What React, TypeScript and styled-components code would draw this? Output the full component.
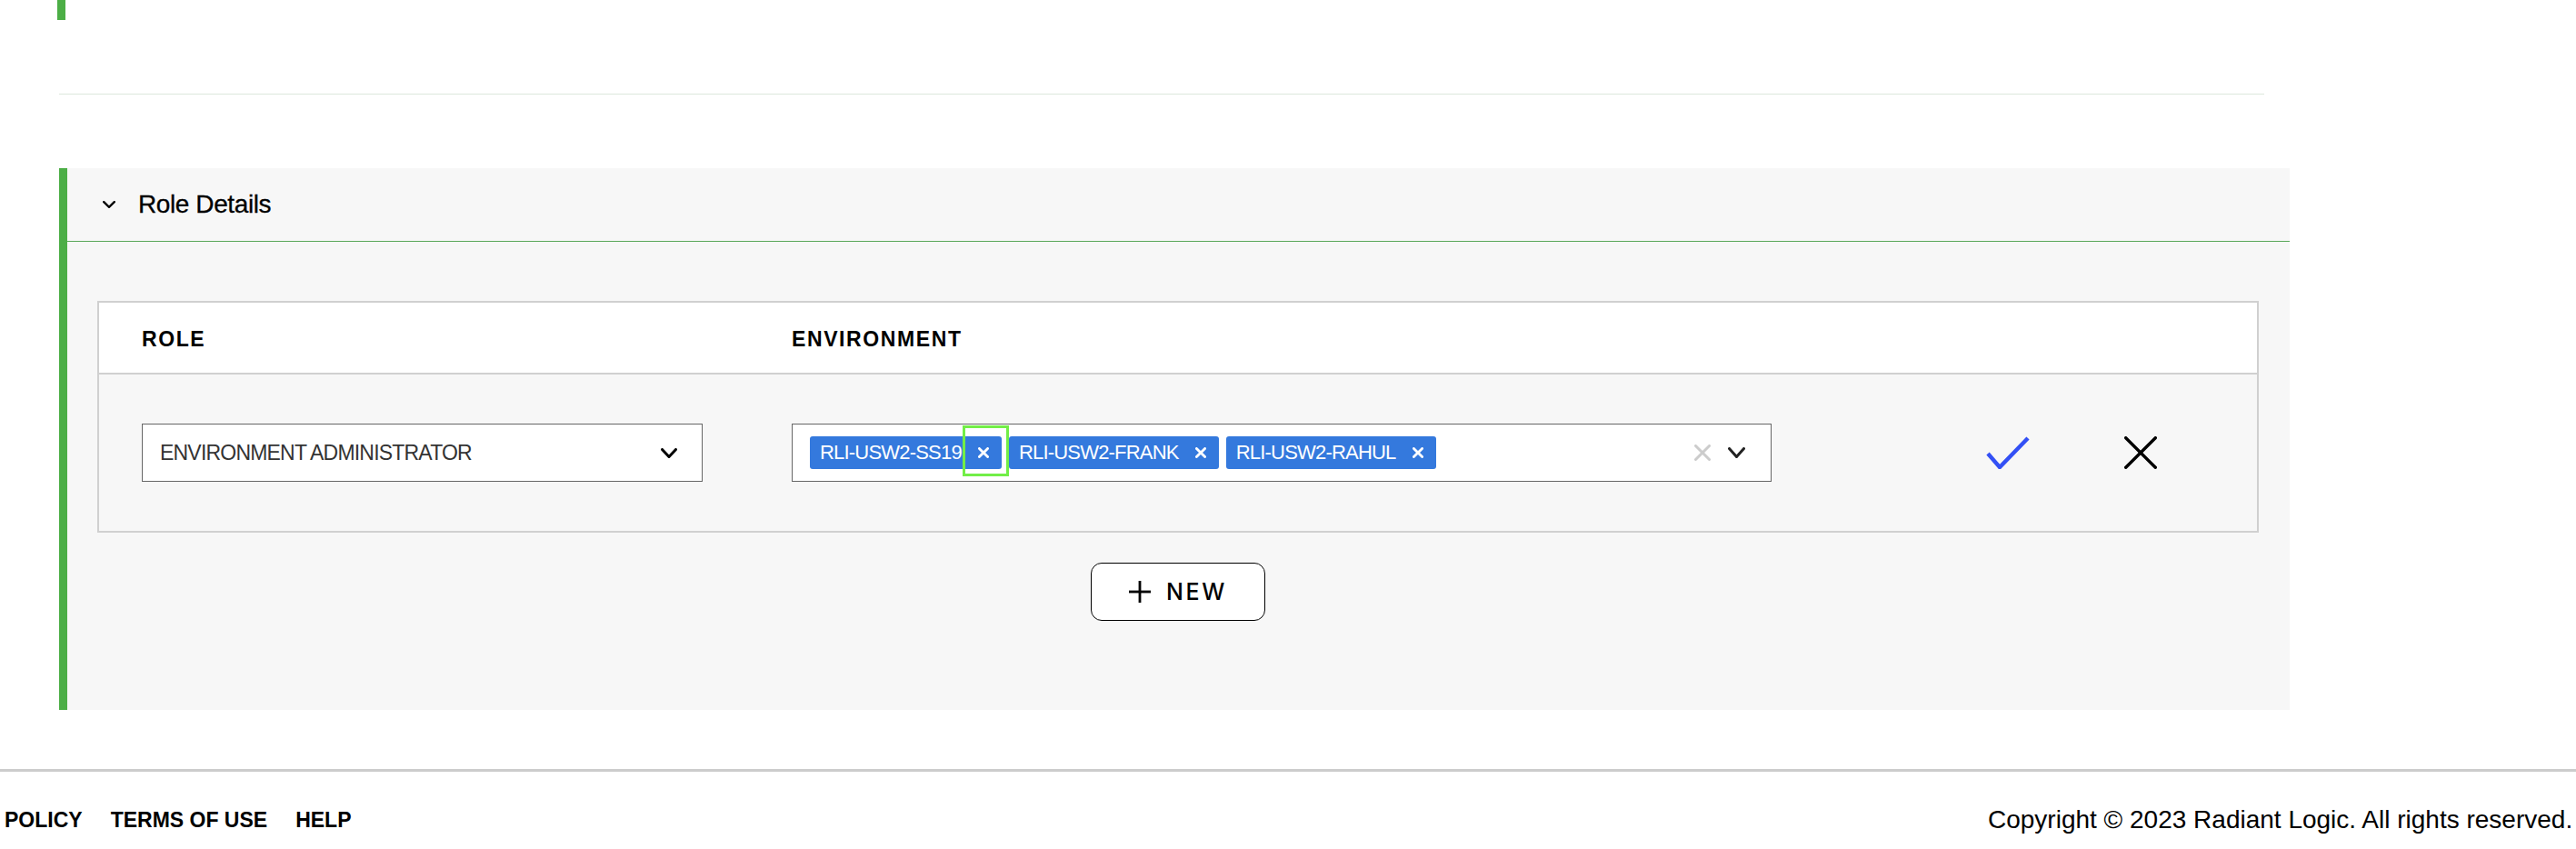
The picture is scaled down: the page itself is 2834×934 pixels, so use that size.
import React from "react";
import styled, { createGlobalStyle } from "styled-components";

const GlobalStyle = createGlobalStyle`
  html, body {
    margin: 0;
    padding: 0;
    background: #ffffff;
    overflow: hidden;
  }
  body {
    font-family: "Liberation Sans", Arial, sans-serif;
    color: #000;
  }
`;

const Page = styled.div`
  width: 2834px;
  height: 934px;
  display: flex;
  flex-direction: column;
`;

const Main = styled.main`
  width: 2456px;
  margin-left: 63px;
  display: flex;
  flex-direction: column;
  flex-shrink: 0;
`;

const PrevSection = styled.div`
  height: 22px;
  border-left: 9px solid #4cae46;
`;

const Divider = styled.hr`
  margin: 81px 28px 0 2px;
  border: none;
  height: 1px;
  background: #dde8dd;
`;

const Panel = styled.section`
  margin: 81px 0 0 2px;
  background: #f7f7f7;
  border-left: 9px solid #4cae46;
`;

const PanelHeader = styled.div`
  height: 80px;
  border-bottom: 1px solid #5aa75a;
  display: flex;
  align-items: center;
  gap: 25px;
  padding-left: 39px;
`;

const Title = styled.h2`
  margin: 0;
  font-size: 28px;
  font-weight: 400;
  letter-spacing: -0.4px;
  color: #000;
  -webkit-text-stroke: 0.3px #000;
`;

const PanelBody = styled.div`
  padding: 65px 34px 98px 33px;
  display: flex;
  flex-direction: column;
  align-items: center;
`;

const Table = styled.div`
  width: 100%;
  box-sizing: border-box;
  border: 2px solid #d0d0d0;
`;

const Row = styled.div<{ head?: boolean }>`
  display: flex;
  align-items: center;
  box-sizing: border-box;
  padding: ${(p) => (p.head ? "4px 0 0 47px" : "0 0 0 47px")};
  height: ${(p) => (p.head ? "79px" : "172px")};
  background: ${(p) => (p.head ? "#ffffff" : "#f7f7f7")};
  border-bottom: ${(p) => (p.head ? "2px solid #d0d0d0" : "none")};
`;

const Cell = styled.div<{ w: number }>`
  flex: 0 0 ${(p) => p.w}px;
  display: flex;
  align-items: center;
`;

const HeadLabel = styled.span`
  font-size: 23px;
  font-weight: 700;
  letter-spacing: 1.6px;
  color: #000;
`;

const SelectBox = styled.div<{ w: number }>`
  width: ${(p) => p.w}px;
  height: 64px;
  box-sizing: border-box;
  border: 1.5px solid #666666;
  background: #ffffff;
  display: flex;
  align-items: center;
  padding: 0 27px 0 19px;
`;

const SelectText = styled.span`
  flex: 1;
  font-size: 23px;
  letter-spacing: -0.8px;
  color: #333333;
`;

const Chips = styled.div`
  flex: 1;
  display: flex;
  align-items: center;
  gap: 8px;
`;

const Chip = styled.div`
  height: 36px;
  display: flex;
  align-items: center;
  background: #3479dd;
  border-radius: 3px;
  padding-left: 11px;
  color: #ffffff;
  font-size: 22px;
  letter-spacing: -0.8px;
`;

const ChipRemove = styled.span<{ focused?: boolean }>`
  position: relative;
  width: 40px;
  height: 36px;
  margin-left: 4px;
  display: flex;
  align-items: center;
  justify-content: center;

  &::after {
    content: "";
    display: ${(p) => (p.focused ? "block" : "none")};
    position: absolute;
    left: -3px;
    right: -8px;
    top: -12px;
    bottom: -8px;
    border: 3px solid #72ee47;
  }
`;

const Indicators = styled.div`
  display: flex;
  align-items: center;
  gap: 19px;
`;

const Actions = styled.div`
  display: flex;
  align-items: center;
  margin-left: 236px;
  gap: 104px;
`;

const NewButton = styled.button`
  margin-top: 33px;
  width: 192px;
  height: 64px;
  box-sizing: border-box;
  border: 1.5px solid #000;
  border-radius: 12px;
  background: #ffffff;
  display: flex;
  align-items: center;
  justify-content: center;
  gap: 17px;
  padding: 0;
  font-family: Inter, "Liberation Sans", sans-serif;
  font-size: 25px;
  font-weight: 500;
  letter-spacing: 2.6px;
  color: #000;
`;

const Footer = styled.footer`
  flex-shrink: 0;
  margin-top: 65px;
  border-top: 3px solid #cccccc;
  height: 106px;
  display: flex;
  align-items: center;
  padding-left: 5px;
`;

const FooterLinks = styled.nav`
  display: flex;
  gap: 31px;
`;

const FooterLink = styled.a`
  font-size: 23px;
  font-weight: 700;
  color: #000;
  text-decoration: none;
`;

const Copyright = styled.span`
  flex: 0 0 647px;
  min-width: 0;
  margin-left: auto;
  white-space: nowrap;
  font-size: 28px;
  letter-spacing: 0;
  color: #000;
`;

const Chevron = ({ w, h, sw, color = "#000" }: { w: number; h: number; sw: number; color?: string }) => (
  <svg width={w} height={h} viewBox={`0 0 ${w} ${h}`} fill="none">
    <polyline
      points={`${sw / 2},${sw / 2} ${w / 2},${h - sw / 2} ${w - sw / 2},${sw / 2}`}
      stroke={color}
      strokeWidth={sw}
      strokeLinecap="round"
      strokeLinejoin="miter"
    />
  </svg>
);

const Cross = ({ size, sw, color }: { size: number; sw: number; color: string }) => (
  <svg width={size} height={size} viewBox={`0 0 ${size} ${size}`} fill="none">
    <line x1={sw / 2} y1={sw / 2} x2={size - sw / 2} y2={size - sw / 2} stroke={color} strokeWidth={sw} strokeLinecap="round" />
    <line x1={size - sw / 2} y1={sw / 2} x2={sw / 2} y2={size - sw / 2} stroke={color} strokeWidth={sw} strokeLinecap="round" />
  </svg>
);

const environments = ["RLI-USW2-SS19", "RLI-USW2-FRANK", "RLI-USW2-RAHUL"];

export default function App() {
  return (
    <Page>
      <GlobalStyle />
      <Main>
        <PrevSection />
        <Divider />
        <Panel>
          <PanelHeader>
            <Chevron w={14} h={8} sw={2.4} />
            <Title>Role Details</Title>
          </PanelHeader>
          <PanelBody>
            <Table>
              <Row head>
                <Cell w={715}>
                  <HeadLabel>ROLE</HeadLabel>
                </Cell>
                <Cell w={1078}>
                  <HeadLabel>ENVIRONMENT</HeadLabel>
                </Cell>
              </Row>
              <Row>
                <Cell w={715}>
                  <SelectBox w={617}>
                    <SelectText>ENVIRONMENT ADMINISTRATOR</SelectText>
                    <Chevron w={18} h={11} sw={3} />
                  </SelectBox>
                </Cell>
                <Cell w={1078}>
                  <SelectBox w={1078} style={{ paddingRight: 28 }}>
                    <Chips>
                      {environments.map((env, i) => (
                        <Chip key={env}>
                          {env}
                          <ChipRemove focused={i === 0}>
                            <Cross size={12} sw={2.8} color="#ffffff" />
                          </ChipRemove>
                        </Chip>
                      ))}
                    </Chips>
                    <Indicators>
                      <Cross size={18} sw={3} color="#cccccc" />
                      <Chevron w={19} h={12} sw={3} color="#222222" />
                    </Indicators>
                  </SelectBox>
                </Cell>
                <Actions>
                  <svg width="48" height="36" viewBox="0 0 48 36" fill="none">
                    <polyline points="2,19 15,34 46,2" stroke="#3350f5" strokeWidth="4.4" fill="none" />
                  </svg>
                  <Cross size={36} sw={3.4} color="#000000" />
                </Actions>
              </Row>
            </Table>
            <NewButton>
              <svg width="24" height="24" viewBox="0 0 24 24" fill="none">
                <line x1="12" y1="0" x2="12" y2="24" stroke="#000" strokeWidth="2.8" />
                <line x1="0" y1="12" x2="24" y2="12" stroke="#000" strokeWidth="2.8" />
              </svg>
              NEW
            </NewButton>
          </PanelBody>
        </Panel>
      </Main>
      <Footer>
        <FooterLinks>
          <FooterLink href="#">POLICY</FooterLink>
          <FooterLink href="#">TERMS OF USE</FooterLink>
          <FooterLink href="#">HELP</FooterLink>
        </FooterLinks>
        <Copyright>Copyright © 2023 Radiant Logic. All rights reserved.</Copyright>
      </Footer>
    </Page>
  );
}
